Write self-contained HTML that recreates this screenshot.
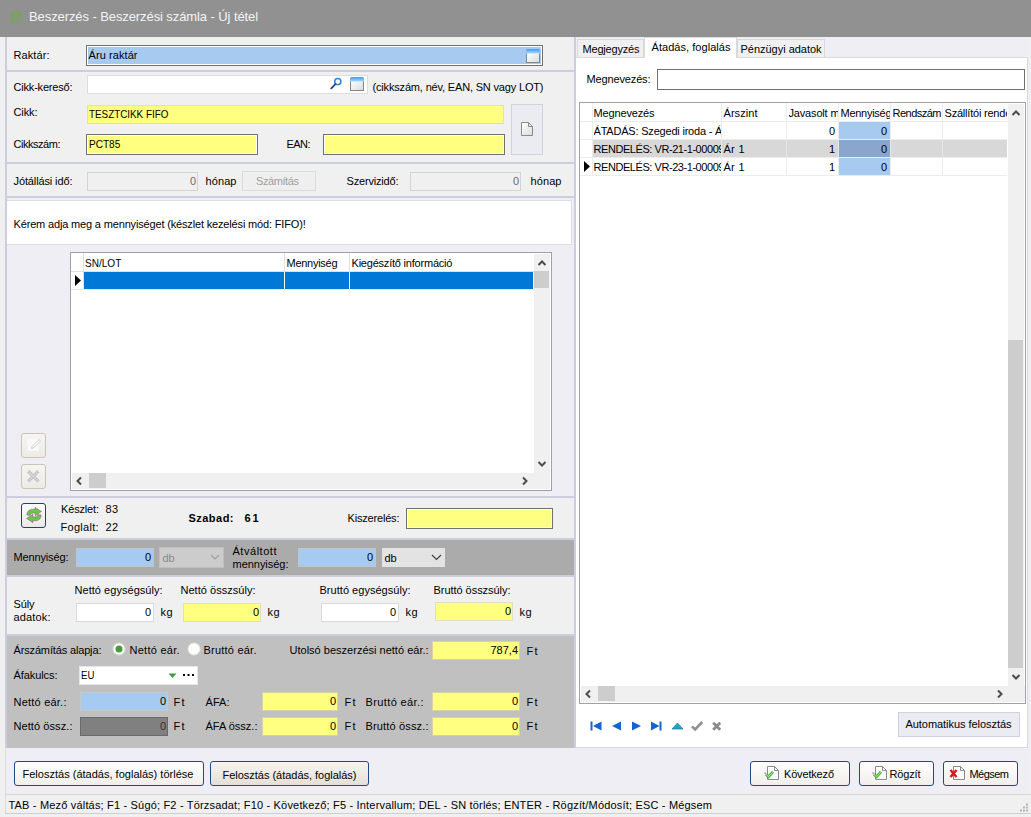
<!DOCTYPE html>
<html><head><meta charset="utf-8"><title>Beszerzés</title>
<style>
html,body{margin:0;padding:0}
body{width:1031px;height:817px;position:relative;overflow:hidden;background:#f0f0f0;font-family:"Liberation Sans",sans-serif;font-size:11px;color:#000}
div,svg{position:absolute;box-sizing:border-box}
.t{white-space:nowrap;line-height:13px}
</style></head><body>
<div style="left:0px;top:0px;width:1031px;height:37px;background:#919191;"></div>
<svg style="left:8px;top:9px" width="17" height="17" viewBox="0 0 17 17"><g stroke="#6fac46" stroke-width="1.5" fill="none" stroke-linecap="round"><path d="M3.2 4.05Q8.05 8.15 12.6 4.05"/><path d="M2.3 6.4Q6.65 5.9 6.4 13.8"/><path d="M13.6 6.4Q9.25 5.9 9.5 13.9"/></g><g fill="#6fac46"><circle cx="6.6" cy="2.4" r="0.95"/><circle cx="9.7" cy="2.4" r="0.95"/><circle cx="2" cy="9.6" r="0.95"/><circle cx="3.5" cy="12.3" r="0.95"/><circle cx="14.1" cy="9.8" r="0.95"/><circle cx="12.5" cy="12.3" r="0.95"/></g></svg>
<div class="t" style="top:9px;line-height:15px;font-size:13px;color:#f4f4f4;letter-spacing:-0.09px;left:29.0px;">Beszerzés - Beszerzési számla - Új tétel</div>
<div style="left:5px;top:37px;width:1025px;height:757px;background:#eeeef4;"></div>
<div style="left:5px;top:37px;width:571px;height:711px;background:#f0f0f0;"></div>
<div style="left:5px;top:37px;width:2px;height:711px;background:#cdcedd;"></div>
<div style="left:574px;top:37px;width:2px;height:711px;background:#cdcedd;"></div>
<div style="left:7px;top:198px;width:567px;height:298px;background:#eeeef4;"></div>
<div style="left:5px;top:70px;width:571px;height:2px;background:#cdcedd;"></div>
<div style="left:5px;top:162px;width:571px;height:2px;background:#cdcedd;"></div>
<div style="left:5px;top:196px;width:571px;height:2px;background:#cdcedd;"></div>
<div style="left:5px;top:496px;width:571px;height:2px;background:#cdcedd;"></div>
<div style="left:5px;top:538px;width:571px;height:2px;background:#cdcedd;"></div>
<div style="left:5px;top:575px;width:571px;height:2px;background:#cdcedd;"></div>
<div style="left:5px;top:634px;width:571px;height:2px;background:#cdcedd;"></div>
<div class="t" style="top:49px;line-height:13px;font-size:11px;letter-spacing:0.09px;left:13.5px;">Raktár:</div>
<div style="left:86px;top:45px;width:457px;height:21px;background:#a6caf0;border:1px solid #707070;box-shadow:inset 0 0 0 1px #fff;"></div>
<div class="t" style="top:49px;line-height:13px;font-size:11px;letter-spacing:0.08px;left:88.5px;">Áru raktár</div>
<svg style="left:526px;top:49px" width="14" height="14" viewBox="0 0 14 14"><defs><linearGradient id="wb" x1="0" y1="0" x2="0" y2="1"><stop offset="0" stop-color="#3d9be8"/><stop offset="1" stop-color="#a6dcff"/></linearGradient><linearGradient id="wg" x1="0" y1="0" x2="1" y2="1"><stop offset="0" stop-color="#ffffff"/><stop offset="1" stop-color="#dcdcdc"/></linearGradient></defs><rect x="0.5" y="3.500" width="13" height="10" fill="url(#wg)" stroke="#858585"/><path d="M0 4.500V1.500Q0 0 1.500 0h11Q14 0 14 1.500v3z" fill="url(#wb)"/></svg>
<div class="t" style="top:81px;line-height:13px;font-size:11px;letter-spacing:-0.19px;left:13.5px;">Cikk-kereső:</div>
<div style="left:87px;top:75px;width:281px;height:19px;background:#fff;border:1px solid #dedede;"></div>
<svg style="left:330px;top:77px" width="14" height="14" viewBox="0 0 14 14"><circle cx="7.800" cy="4.600" r="3.100" fill="#fff" stroke="#3080d4" stroke-width="1.500"/><path d="M5.400 7.100L1.300 11.300" stroke="#244a94" stroke-width="1.900" stroke-linecap="round"/></svg>
<svg style="left:350px;top:77px" width="14" height="14" viewBox="0 0 14 14"><defs><linearGradient id="wb" x1="0" y1="0" x2="0" y2="1"><stop offset="0" stop-color="#3d9be8"/><stop offset="1" stop-color="#a6dcff"/></linearGradient><linearGradient id="wg" x1="0" y1="0" x2="1" y2="1"><stop offset="0" stop-color="#ffffff"/><stop offset="1" stop-color="#dcdcdc"/></linearGradient></defs><rect x="0.5" y="3.500" width="13" height="10" fill="url(#wg)" stroke="#858585"/><path d="M0 4.500V1.500Q0 0 1.500 0h11Q14 0 14 1.500v3z" fill="url(#wb)"/></svg>
<div class="t" style="top:81px;line-height:13px;font-size:11px;letter-spacing:-0.17px;left:372.5px;">(cikkszám, név, EAN, SN vagy LOT)</div>
<div class="t" style="top:106px;line-height:13px;font-size:11px;letter-spacing:-0.11px;left:13.5px;">Cikk:</div>
<div style="left:87px;top:105px;width:417px;height:19px;background:#ffff80;border:1px solid #e0e0c0;"></div>
<div class="t" style="top:108px;line-height:13px;font-size:11px;transform:scaleX(0.895);transform-origin:0 0;left:88.5px;">TESZTCIKK FIFO</div>
<div class="t" style="top:138px;line-height:13px;font-size:11px;letter-spacing:-0.47px;left:13.5px;">Cikkszám:</div>
<div style="left:86px;top:134px;width:172px;height:21px;background:#ffff80;border:1px solid #707070;box-shadow:inset 0 0 0 1px #fff;"></div>
<div class="t" style="top:138px;line-height:13px;font-size:11px;transform:scaleX(0.914);transform-origin:0 0;left:88.5px;">PCT85</div>
<div class="t" style="top:138px;line-height:13px;font-size:11px;letter-spacing:-0.56px;left:286.5px;">EAN:</div>
<div style="left:323px;top:134px;width:182px;height:21px;background:#ffff80;border:1px solid #707070;box-shadow:inset 0 0 0 1px #fff;"></div>
<div style="left:511px;top:104px;width:32px;height:51px;background:#ebebf2;border:1px solid #cfd0e2;"></div>
<svg style="left:521px;top:122px" width="13" height="15" viewBox="0 0 13 15"><path d="M0.500 0.500h7l4 4v9h-11z" fill="url(#wg)" stroke="#8a8a8a"/><path d="M7.500 0.500v4h4" fill="none" stroke="#8a8a8a"/></svg>
<div class="t" style="top:175px;line-height:13px;font-size:11px;letter-spacing:-0.12px;left:13.5px;">Jótállási idő:</div>
<div style="left:87px;top:172px;width:111px;height:19px;background:#f0f0f0;border:1px solid #d4d4d4;"></div>
<div class="t" style="top:175px;line-height:13px;font-size:11px;color:#6d6d6d;right:835px;text-align:right;">0</div>
<div class="t" style="top:175px;line-height:13px;font-size:11px;letter-spacing:0.1px;left:205.5px;">hónap</div>
<div style="left:242px;top:171px;width:74px;height:20px;background:#efefef;border:1px solid #dcdcdc;"></div>
<div class="t" style="top:175px;line-height:13px;font-size:11px;color:#a0a0a0;letter-spacing:-0.41px;left:256.0px;">Számítás</div>
<div class="t" style="top:175px;line-height:13px;font-size:11px;letter-spacing:-0.18px;left:346.5px;">Szervizidő:</div>
<div style="left:410px;top:172px;width:111px;height:19px;background:#f0f0f0;border:1px solid #d4d4d4;"></div>
<div class="t" style="top:175px;line-height:13px;font-size:11px;color:#6d6d6d;right:512px;text-align:right;">0</div>
<div class="t" style="top:175px;line-height:13px;font-size:11px;letter-spacing:0.1px;left:530.5px;">hónap</div>
<div style="left:7px;top:200px;width:565px;height:45px;background:#fff;border:1px solid #dcdcdc;border-left:none;"></div>
<div class="t" style="top:218px;line-height:13px;font-size:11px;letter-spacing:-0.16px;left:13.5px;">Kérem adja meg a mennyiséget (készlet kezelési mód: FIFO)!</div>
<div style="left:70px;top:252px;width:482px;height:239px;background:#fff;border:1px solid #a0a0a8;"></div>
<div style="left:71px;top:271px;width:463px;height:1px;background:#e0e0e0;"></div>
<div style="left:83px;top:253px;width:1px;height:36px;background:#e0e0e0;"></div>
<div style="left:284px;top:253px;width:1px;height:19px;background:#e0e0e0;"></div>
<div style="left:349px;top:253px;width:1px;height:19px;background:#e0e0e0;"></div>
<div class="t" style="top:257px;line-height:13px;font-size:11px;transform:scaleX(0.914);transform-origin:0 0;left:84.5px;">SN/LOT</div>
<div class="t" style="top:257px;line-height:13px;font-size:11px;letter-spacing:-0.27px;left:286.5px;">Mennyiség</div>
<div class="t" style="top:257px;line-height:13px;font-size:11px;letter-spacing:-0.21px;left:351.5px;">Kiegészítő információ</div>
<div style="left:84px;top:272px;width:449px;height:17px;background:#0078d7;"></div>
<div style="left:284px;top:272px;width:1px;height:17px;background:#fff;"></div>
<div style="left:349px;top:272px;width:1px;height:17px;background:#fff;"></div>
<div style="left:71px;top:289px;width:463px;height:1px;background:#e8e8e8;"></div>
<svg style="left:75px;top:275px" width="6" height="11"><path d="M0 0l6 5.500L0 11z" fill="#000"/></svg>
<div style="left:534px;top:254px;width:16px;height:219px;background:#f0f0f0;"></div>
<div style="left:534px;top:271px;width:15px;height:17px;background:#cdcdcd;"></div>
<svg style="left:536.500px;top:257.500px" width="10" height="10"><path d="M1.500 7L5 3.500 8.500 7" fill="none" stroke="#4c4c4c" stroke-width="2"/></svg>
<svg style="left:536.500px;top:458.500px" width="10" height="10"><path d="M1.500 3L5 6.500 8.500 3" fill="none" stroke="#4c4c4c" stroke-width="2"/></svg>
<div style="left:72px;top:473px;width:478px;height:16px;background:#f0f0f0;"></div>
<div style="left:89px;top:473px;width:17px;height:15px;background:#cdcdcd;"></div>
<svg style="left:75px;top:475.500px" width="8" height="10"><path d="M6 1.500L2.500 5 6 8.500" fill="none" stroke="#4c4c4c" stroke-width="2"/></svg>
<svg style="left:520.500px;top:475.500px" width="8" height="10"><path d="M2 1.500L5.500 5 2 8.500" fill="none" stroke="#4c4c4c" stroke-width="2"/></svg>
<div style="left:21px;top:433px;width:25px;height:25px;background:linear-gradient(#f6f5f3,#eeebe6);border:1px solid #cdc4b6;border-radius:3px;"></div>
<svg style="left:26px;top:436px" width="16" height="16"><rect x="1.5" y="3" width="11" height="12" fill="#f9f9f8"/><path d="M6 10.5L13 3.500l1.500 1.500-7 7-2 .5z" fill="#fdfdfd" stroke="#c6c6c6" stroke-width="0.9"/></svg>
<div style="left:21px;top:464px;width:25px;height:25px;background:linear-gradient(#f6f5f3,#eeebe6);border:1px solid #cdc4b6;border-radius:3px;"></div>
<svg style="left:26px;top:469px" width="14" height="14"><path d="M2 2l10.500 10.500M12.500 2L2 12.500" stroke="#c4c4c4" stroke-width="3.2"/><path d="M2 2l10.500 10.500M12.500 2L2 12.500" stroke="#e8e8e8" stroke-width="1.2" stroke-dasharray="1.2 1.2"/></svg>
<div style="left:21px;top:503px;width:25px;height:25px;background:linear-gradient(#fbfbfa,#ece9e4);border:1px solid #15428b;border-radius:3px;"></div>
<svg style="left:26px;top:507px" width="16" height="16" viewBox="0 0 15 15"><g fill="#5bd03a" stroke="#c822c8" stroke-width="0.45" stroke-linejoin="round"><path id="ra" d="M0.800 7.500C0.800 3.500 4 1.500 8.500 2.200V0.300L14.500 4.200 8.500 8.200V5.800C6 5.300 4.200 6 4 8z"/><path d="M0.800 7.500C0.800 3.500 4 1.500 8.500 2.200V0.300L14.500 4.200 8.500 8.200V5.800C6 5.300 4.200 6 4 8z" transform="rotate(180 7.500 7.500)"/></g></svg>
<div class="t" style="top:503px;line-height:13px;font-size:11px;letter-spacing:-0.16px;left:61.0px;">Készlet:</div>
<div class="t" style="top:503px;line-height:13px;font-size:11px;letter-spacing:0.26px;left:105.5px;">83</div>
<div class="t" style="top:521px;line-height:13px;font-size:11px;letter-spacing:0.28px;left:60.5px;">Foglalt:</div>
<div class="t" style="top:521px;line-height:13px;font-size:11px;letter-spacing:0.26px;left:105.5px;">22</div>
<div class="t" style="top:512px;line-height:13px;font-size:11px;font-weight:bold;letter-spacing:0.47px;left:188.5px;">Szabad:</div>
<div class="t" style="top:512px;line-height:13px;font-size:11px;font-weight:bold;letter-spacing:1.76px;left:244.5px;">61</div>
<div class="t" style="top:512px;line-height:13px;font-size:11px;letter-spacing:-0.18px;left:347.5px;">Kiszerelés:</div>
<div style="left:406px;top:508px;width:147px;height:21px;background:#ffff80;border:1px solid #707070;box-shadow:inset 0 0 0 1px #fff;"></div>
<div style="left:7px;top:540px;width:567px;height:35px;background:#ababab;"></div>
<div class="t" style="top:551px;line-height:13px;font-size:11px;letter-spacing:-0.14px;left:13.5px;">Mennyiség:</div>
<div style="left:76px;top:548px;width:78px;height:19px;background:#a6caf0;border:1px solid #c4c4c4;"></div>
<div class="t" style="top:551px;line-height:13px;font-size:11px;right:880px;text-align:right;">0</div>
<div style="left:159px;top:547px;width:65px;height:21px;background:#cccccc;border:1px solid #bfbfbf;"></div>
<div class="t" style="top:552px;line-height:13px;font-size:11px;color:#8a8a8a;letter-spacing:-0.24px;left:162.5px;">db</div>
<svg style="left:210px;top:554px" width="10" height="7"><path d="M1 1l4 4 4-4" fill="none" stroke="#a0a0a0" stroke-width="1.200"/></svg>
<div class="t" style="top:545px;line-height:13px;font-size:11px;letter-spacing:0.53px;left:232.5px;">Átváltott</div>
<div class="t" style="top:558px;line-height:13px;font-size:11px;letter-spacing:-0.03px;left:232.5px;">mennyiség:</div>
<div style="left:298px;top:548px;width:78px;height:19px;background:#a6caf0;border:1px solid #c4c4c4;"></div>
<div class="t" style="top:551px;line-height:13px;font-size:11px;right:658px;text-align:right;">0</div>
<div style="left:382px;top:548px;width:63px;height:19px;background:#e3e3e3;"></div>
<div class="t" style="top:552px;line-height:13px;font-size:11px;letter-spacing:-0.24px;left:384.5px;">db</div>
<svg style="left:431px;top:554px" width="11" height="7"><path d="M1 1l4.500 4.500L10 1" fill="none" stroke="#404040" stroke-width="1.200"/></svg>
<div class="t" style="top:584px;line-height:13px;font-size:11px;letter-spacing:0.04px;left:74.5px;">Nettó egységsúly:</div>
<div class="t" style="top:584px;line-height:13px;font-size:11px;letter-spacing:0.03px;left:180.5px;">Nettó összsúly:</div>
<div class="t" style="top:584px;line-height:13px;font-size:11px;letter-spacing:0.03px;left:319.5px;">Bruttó egységsúly:</div>
<div class="t" style="top:584px;line-height:13px;font-size:11px;letter-spacing:-0.04px;left:433.5px;">Bruttó összsúly:</div>
<div class="t" style="top:598px;line-height:13px;font-size:11px;letter-spacing:-0.13px;left:13.5px;">Súly</div>
<div class="t" style="top:611px;line-height:13px;font-size:11px;letter-spacing:0.15px;left:13.5px;">adatok:</div>
<div style="left:76px;top:603px;width:78px;height:19px;background:#fff;border:1px solid #d9d9d9;"></div>
<div class="t" style="top:606px;line-height:13px;font-size:11px;right:880px;text-align:right;">0</div>
<div class="t" style="top:606px;line-height:13px;font-size:11px;letter-spacing:0.38px;left:160.5px;">kg</div>
<div style="left:183px;top:603px;width:78px;height:19px;background:#ffff80;border:1px solid #e0e0c0;"></div>
<div class="t" style="top:606px;line-height:13px;font-size:11px;right:772px;text-align:right;">0</div>
<div class="t" style="top:606px;line-height:13px;font-size:11px;letter-spacing:0.38px;left:267.5px;">kg</div>
<div style="left:321px;top:603px;width:78px;height:19px;background:#fff;border:1px solid #d9d9d9;"></div>
<div class="t" style="top:606px;line-height:13px;font-size:11px;right:635px;text-align:right;">0</div>
<div class="t" style="top:606px;line-height:13px;font-size:11px;letter-spacing:0.38px;left:405.5px;">kg</div>
<div style="left:435px;top:602px;width:78px;height:19px;background:#ffff80;border:1px solid #e0e0c0;"></div>
<div class="t" style="top:605px;line-height:13px;font-size:11px;right:520px;text-align:right;">0</div>
<div class="t" style="top:606px;line-height:13px;font-size:11px;letter-spacing:0.38px;left:519.5px;">kg</div>
<div style="left:7px;top:636px;width:567px;height:112px;background:#c0c0c0;"></div>
<div class="t" style="top:644px;line-height:13px;font-size:11px;letter-spacing:-0.15px;left:13.5px;">Árszámítás alapja:</div>
<svg style="left:111.500px;top:642px" width="14" height="14"><circle cx="7" cy="7" r="6" fill="#fff" stroke="#d8e4d0"/><circle cx="7" cy="7" r="3.500" fill="#479c3a"/></svg>
<div class="t" style="top:644px;line-height:13px;font-size:11px;letter-spacing:0.26px;left:129.5px;">Nettó eár.</div>
<svg style="left:186.500px;top:642px" width="14" height="14"><circle cx="7" cy="7" r="6" fill="#fff" stroke="#e0e8dc"/></svg>
<div class="t" style="top:644px;line-height:13px;font-size:11px;letter-spacing:0.22px;left:203.5px;">Bruttó eár.</div>
<div class="t" style="top:644px;line-height:13px;font-size:11px;letter-spacing:0.01px;left:289.5px;">Utolsó beszerzési nettó eár.:</div>
<div style="left:432px;top:641px;width:88px;height:19px;background:#ffff80;border:1px solid #d4d4a8;"></div>
<div class="t" style="top:644px;line-height:13px;font-size:11px;right:513px;text-align:right;">787,4</div>
<div class="t" style="top:645px;line-height:13px;font-size:11px;letter-spacing:1.22px;left:526.5px;">Ft</div>
<div class="t" style="top:669px;line-height:13px;font-size:11px;letter-spacing:-0.08px;left:13.5px;">Áfakulcs:</div>
<div style="left:79px;top:666px;width:119px;height:19px;background:#fff;border:1px solid #e6e6e6;"></div>
<div class="t" style="top:669px;line-height:13px;font-size:11px;transform:scaleX(0.87);transform-origin:0 0;left:80.5px;">EU</div>
<svg style="left:168px;top:673px" width="9" height="6"><path d="M0.500 0.500h8L4.500 5z" fill="#3f9e3a"/></svg>
<svg style="left:183px;top:674px" width="12" height="3"><rect x="0" y="0" width="2" height="2"/><rect x="4.500" y="0" width="2" height="2"/><rect x="9" y="0" width="2" height="2"/></svg>
<div class="t" style="top:696px;line-height:13px;font-size:11px;letter-spacing:0.22px;left:13.5px;">Nettó eár.:</div>
<div style="left:80px;top:692px;width:88px;height:19px;background:#a6caf0;border:1px solid #c8c8c8;"></div>
<div class="t" style="top:695px;line-height:13px;font-size:11px;right:865px;text-align:right;">0</div>
<div class="t" style="top:696px;line-height:13px;font-size:11px;letter-spacing:1.22px;left:173.5px;">Ft</div>
<div class="t" style="top:696px;line-height:13px;font-size:11px;letter-spacing:0.05px;left:205.5px;">ÁFA:</div>
<div style="left:262px;top:692px;width:76px;height:19px;background:#ffff80;border:1px solid #d4d4a8;"></div>
<div class="t" style="top:695px;line-height:13px;font-size:11px;right:695px;text-align:right;">0</div>
<div class="t" style="top:696px;line-height:13px;font-size:11px;letter-spacing:1.22px;left:344.5px;">Ft</div>
<div class="t" style="top:696px;line-height:13px;font-size:11px;letter-spacing:0.38px;left:365.5px;">Bruttó eár.:</div>
<div style="left:432px;top:692px;width:88px;height:19px;background:#ffff80;border:1px solid #d4d4a8;"></div>
<div class="t" style="top:695px;line-height:13px;font-size:11px;right:513px;text-align:right;">0</div>
<div class="t" style="top:696px;line-height:13px;font-size:11px;letter-spacing:1.22px;left:526.5px;">Ft</div>
<div class="t" style="top:720px;line-height:13px;font-size:11px;letter-spacing:0.08px;left:13.5px;">Nettó össz.:</div>
<div style="left:80px;top:717px;width:88px;height:19px;background:#808080;border:1px solid #6a6a6a;"></div>
<div class="t" style="top:720px;line-height:13px;font-size:11px;color:#303030;right:865px;text-align:right;">0</div>
<div class="t" style="top:720px;line-height:13px;font-size:11px;letter-spacing:1.22px;left:173.5px;">Ft</div>
<div class="t" style="top:720px;line-height:13px;font-size:11px;left:205.5px;">ÁFA össz.:</div>
<div style="left:262px;top:717px;width:76px;height:19px;background:#ffff80;border:1px solid #d4d4a8;"></div>
<div class="t" style="top:720px;line-height:13px;font-size:11px;right:695px;text-align:right;">0</div>
<div class="t" style="top:720px;line-height:13px;font-size:11px;letter-spacing:1.22px;left:344.5px;">Ft</div>
<div class="t" style="top:720px;line-height:13px;font-size:11px;letter-spacing:0.16px;left:365.5px;">Bruttó össz.:</div>
<div style="left:432px;top:717px;width:88px;height:19px;background:#ffff80;border:1px solid #d4d4a8;"></div>
<div class="t" style="top:720px;line-height:13px;font-size:11px;right:513px;text-align:right;">0</div>
<div class="t" style="top:720px;line-height:13px;font-size:11px;letter-spacing:1.22px;left:526.5px;">Ft</div>
<div style="left:5px;top:748px;width:1px;height:66px;background:#dcdcdc;"></div>
<div style="left:14px;top:761px;width:190px;height:25px;background:linear-gradient(#ffffff,#f1eeea);border:1px solid #1c4a8a;border-radius:3px;"></div>
<div class="t" style="top:768px;line-height:13px;font-size:11px;letter-spacing:0.01px;left:22.5px;">Felosztás (átadás, foglalás) törlése</div>
<div style="left:210px;top:761px;width:159px;height:25px;background:linear-gradient(#f6f4f1,#e6dfd6);border:1px solid #1c4a8a;border-radius:3px;"></div>
<div class="t" style="top:769px;line-height:13px;font-size:11px;letter-spacing:-0.02px;left:222.5px;">Felosztás (átadás, foglalás)</div>
<div style="left:750px;top:761px;width:100px;height:25px;background:linear-gradient(#ffffff,#f1eeea);border:1px solid #1c4a8a;border-radius:3px;"></div>
<div class="t" style="top:768px;line-height:13px;font-size:11px;letter-spacing:-0.17px;left:784.0px;">Következő</div>
<div style="left:859px;top:761px;width:75px;height:25px;background:linear-gradient(#ffffff,#f1eeea);border:1px solid #1c4a8a;border-radius:3px;"></div>
<div class="t" style="top:768px;line-height:13px;font-size:11px;letter-spacing:-0.16px;left:889.5px;">Rögzít</div>
<div style="left:943px;top:761px;width:75px;height:25px;background:linear-gradient(#ffffff,#f1eeea);border:1px solid #1c4a8a;border-radius:3px;"></div>
<div class="t" style="top:768px;line-height:13px;font-size:11px;letter-spacing:-0.54px;left:969.5px;">Mégsem</div>
<svg style="left:763px;top:765px" width="17" height="16" viewBox="0 0 17 16"><rect x="1" y="0" width="16" height="16" fill="#f7f7f9"/><path d="M4.500 1.500h7l4 4v9h-11z" fill="#fff" stroke="#8a8a8a"/><path d="M11.500 1.500v4h4" fill="none" stroke="#8a8a8a"/><path d="M3 9.200l2.500 2.500 4.500-4.800" fill="none" stroke="#3aa828" stroke-width="2.800"/><path d="M3 9.200l2.500 2.500 4.500-4.800" fill="none" stroke="#8be870" stroke-width="1.200"/><rect x="1.500" y="7.500" width="1.300" height="1.300" fill="#d040d0"/></svg>
<svg style="left:871px;top:765px" width="17" height="16" viewBox="0 0 17 16"><rect x="1" y="0" width="16" height="16" fill="#f7f7f9"/><path d="M4.500 1.500h7l4 4v9h-11z" fill="#fff" stroke="#8a8a8a"/><path d="M11.500 1.500v4h4" fill="none" stroke="#8a8a8a"/><path d="M3 9.200l2.500 2.500 4.500-4.800" fill="none" stroke="#3aa828" stroke-width="2.800"/><path d="M3 9.200l2.500 2.500 4.500-4.800" fill="none" stroke="#8be870" stroke-width="1.200"/><rect x="1.500" y="7.500" width="1.300" height="1.300" fill="#d040d0"/></svg>
<svg style="left:949px;top:765px" width="17" height="16" viewBox="0 0 17 16"><rect x="1" y="0" width="16" height="16" fill="#f7f7f9"/><path d="M4.500 1.500h7l4 4v9h-11z" fill="#fff" stroke="#8a8a8a"/><path d="M11.500 1.500v4h4" fill="none" stroke="#8a8a8a"/><path d="M1.500 5l6 7M7.500 5l-6 7" fill="none" stroke="#e01818" stroke-width="2.600"/></svg>
<div style="left:5px;top:794px;width:1026px;height:1px;background:#d7d7d7;"></div>
<div style="left:5px;top:813px;width:1026px;height:1px;background:#cfcfcf;"></div>
<div class="t" style="top:799px;line-height:13px;font-size:11px;letter-spacing:0.18px;left:8.5px;">TAB - Mező váltás; F1 - Súgó; F2 - Törzsadat; F10 - Következő; F5 - Intervallum; DEL - SN törlés; ENTER - Rögzít/Módosít; ESC - Mégsem</div>
<svg style="left:1020px;top:803px" width="9" height="9"><g fill="#b4b4b4"><rect x="6" y="0.500" width="2" height="2"/><rect x="3" y="3.500" width="2" height="2"/><rect x="6" y="3.500" width="2" height="2"/><rect x="0" y="6.500" width="2" height="2"/><rect x="3" y="6.500" width="2" height="2"/><rect x="6" y="6.500" width="2" height="2"/></g></svg>
<div style="left:576px;top:57px;width:452px;height:691px;background:#fff;border:1px solid #d9d9d9;border-left:none;"></div>
<div style="left:577px;top:39px;width:67px;height:18px;background:#f0f0f0;border:1px solid #d9d9d9;border-bottom:none;"></div>
<div class="t" style="top:43px;line-height:13px;font-size:11px;letter-spacing:-0.19px;left:582.5px;">Megjegyzés</div>
<div style="left:737px;top:39px;width:88px;height:18px;background:#f0f0f0;border:1px solid #d9d9d9;border-bottom:none;"></div>
<div class="t" style="top:43px;line-height:13px;font-size:11px;letter-spacing:-0.02px;left:740.5px;">Pénzügyi adatok</div>
<div style="left:644px;top:37px;width:93px;height:21px;background:#fff;border:1px solid #d9d9d9;border-bottom:none;"></div>
<div class="t" style="top:41px;line-height:13px;font-size:11px;letter-spacing:0.05px;left:651.5px;">Átadás, foglalás</div>
<div class="t" style="top:73px;line-height:13px;font-size:11px;letter-spacing:-0.14px;left:586.5px;">Megnevezés:</div>
<div style="left:657px;top:69px;width:368px;height:21px;background:#fff;border:1px solid #707070;box-shadow:inset 0 0 0 1px #fff;"></div>
<div style="left:579px;top:102px;width:447px;height:602px;background:#fff;border:1px solid #a0a0a8;"></div>
<div style="left:593px;top:140px;width:414px;height:17px;background:#d8d8d8;"></div>
<div style="left:839px;top:122px;width:51px;height:17px;background:#a6caf0;"></div>
<div style="left:839px;top:140px;width:51px;height:17px;background:#8aa6cc;"></div>
<div style="left:839px;top:158px;width:51px;height:17px;background:#a6caf0;"></div>
<div style="left:580px;top:121px;width:427px;height:1px;background:#ececec;"></div>
<div style="left:580px;top:139px;width:427px;height:1px;background:#ececec;"></div>
<div style="left:580px;top:157px;width:427px;height:1px;background:#ececec;"></div>
<div style="left:580px;top:175px;width:427px;height:1px;background:#ececec;"></div>
<div style="left:592px;top:103px;width:1px;height:73px;background:#ececec;"></div>
<div style="left:721px;top:103px;width:1px;height:73px;background:#ececec;"></div>
<div style="left:786px;top:103px;width:1px;height:73px;background:#ececec;"></div>
<div style="left:838px;top:103px;width:1px;height:73px;background:#ececec;"></div>
<div style="left:890px;top:103px;width:1px;height:73px;background:#ececec;"></div>
<div style="left:942px;top:103px;width:1px;height:73px;background:#ececec;"></div>
<div style="left:593px;top:140px;width:1px;height:17px;background:#d8d8d8;"></div>
<div style="left:721px;top:140px;width:1px;height:17px;background:#e6e6e6;"></div>
<div style="left:786px;top:140px;width:1px;height:17px;background:#e6e6e6;"></div>
<div style="left:838px;top:140px;width:1px;height:17px;background:#e6e6e6;"></div>
<div style="left:890px;top:140px;width:1px;height:17px;background:#e6e6e6;"></div>
<div style="left:942px;top:140px;width:1px;height:17px;background:#e6e6e6;"></div>
<div class="t" style="top:107px;line-height:13px;font-size:11px;letter-spacing:-0.15px;left:593.5px;">Megnevezés</div>
<div class="t" style="top:107px;line-height:13px;font-size:11px;letter-spacing:0.06px;left:723.5px;">Árszint</div>
<div class="t" style="left:788.5px;top:107px;width:49.5px;overflow:hidden;line-height:13px;letter-spacing:-0.17px">Javasolt me</div>
<div class="t" style="left:840.5px;top:107px;width:49.5px;overflow:hidden;line-height:13px;letter-spacing:-0.27px">Mennyiség</div>
<div class="t" style="top:107px;line-height:13px;font-size:11px;letter-spacing:-0.51px;left:892.5px;">Rendszám</div>
<div class="t" style="left:944.5px;top:107px;width:62.5px;overflow:hidden;line-height:13px;letter-spacing:-0.21px">Szállítói rendel</div>
<div class="t" style="left:593.5px;top:125px;width:127.5px;overflow:hidden;line-height:13px;letter-spacing:-0.2px">ÁTADÁS: Szegedi iroda - Á</div>
<div class="t" style="left:593.5px;top:143px;width:127.5px;overflow:hidden;line-height:13px;letter-spacing:-0.44px">RENDELÉS: VR-21-1-00009</div>
<div class="t" style="left:593.5px;top:161px;width:127.5px;overflow:hidden;line-height:13px;letter-spacing:-0.44px">RENDELÉS: VR-23-1-00009</div>
<div class="t" style="top:143px;line-height:13px;font-size:11px;letter-spacing:0.28px;left:723.5px;">Ár 1</div>
<div class="t" style="top:161px;line-height:13px;font-size:11px;letter-spacing:0.28px;left:723.5px;">Ár 1</div>
<div class="t" style="top:125px;line-height:13px;font-size:11px;right:196px;text-align:right;">0</div>
<div class="t" style="top:125px;line-height:13px;font-size:11px;right:144px;text-align:right;">0</div>
<div class="t" style="top:143px;line-height:13px;font-size:11px;right:196px;text-align:right;">1</div>
<div class="t" style="top:143px;line-height:13px;font-size:11px;right:144px;text-align:right;">0</div>
<div class="t" style="top:161px;line-height:13px;font-size:11px;right:196px;text-align:right;">1</div>
<div class="t" style="top:161px;line-height:13px;font-size:11px;right:144px;text-align:right;">0</div>
<svg style="left:584px;top:161px" width="6" height="11"><path d="M0 0l6 5.500L0 11z" fill="#000"/></svg>
<div style="left:1008px;top:104px;width:16px;height:582px;background:#f0f0f0;"></div>
<div style="left:1008px;top:340px;width:15px;height:328px;background:#cdcdcd;"></div>
<svg style="left:1010.500px;top:107.500px" width="10" height="10"><path d="M1.500 7L5 3.500 8.500 7" fill="none" stroke="#4c4c4c" stroke-width="2"/></svg>
<svg style="left:1010.500px;top:671.500px" width="10" height="10"><path d="M1.500 3L5 6.500 8.500 3" fill="none" stroke="#4c4c4c" stroke-width="2"/></svg>
<div style="left:581px;top:686px;width:444px;height:16px;background:#f0f0f0;"></div>
<div style="left:598px;top:686px;width:17px;height:15px;background:#cdcdcd;"></div>
<svg style="left:584px;top:688.500px" width="8" height="10"><path d="M6 1.500L2.500 5 6 8.500" fill="none" stroke="#4c4c4c" stroke-width="2"/></svg>
<svg style="left:995.500px;top:688.500px" width="8" height="10"><path d="M2 1.500L5.500 5 2 8.500" fill="none" stroke="#4c4c4c" stroke-width="2"/></svg>
<svg style="left:590px;top:720.500px" width="135" height="11"><g fill="#1464d2"><rect x="0.500" y="0.500" width="2" height="9"/><path d="M11.500 0.500v9L3 5z"/><path d="M31 0.500v9L22 5z"/><path d="M42 0.500v9L51 5z"/><path d="M61 0.500v9L69.500 5z"/><rect x="69.500" y="0.500" width="2" height="9"/></g><path d="M82 8h11L87.500 2z" fill="#18a8c0" stroke="#2880a8" stroke-width="0.800"/><path d="M102 5.500l3.200 3 7-7.500" fill="none" stroke="#909090" stroke-width="2.600"/><path d="M123.200 1.800l7 7M130.200 1.800l-7 7" stroke="#8c8c8c" stroke-width="2.800"/></svg>
<div style="left:898px;top:712px;width:122px;height:25px;background:#ebebf3;border:1px solid #cfd0e2;"></div>
<div class="t" style="top:718px;line-height:13px;font-size:11px;letter-spacing:-0.05px;left:905.5px;">Automatikus felosztás</div>
</body></html>
